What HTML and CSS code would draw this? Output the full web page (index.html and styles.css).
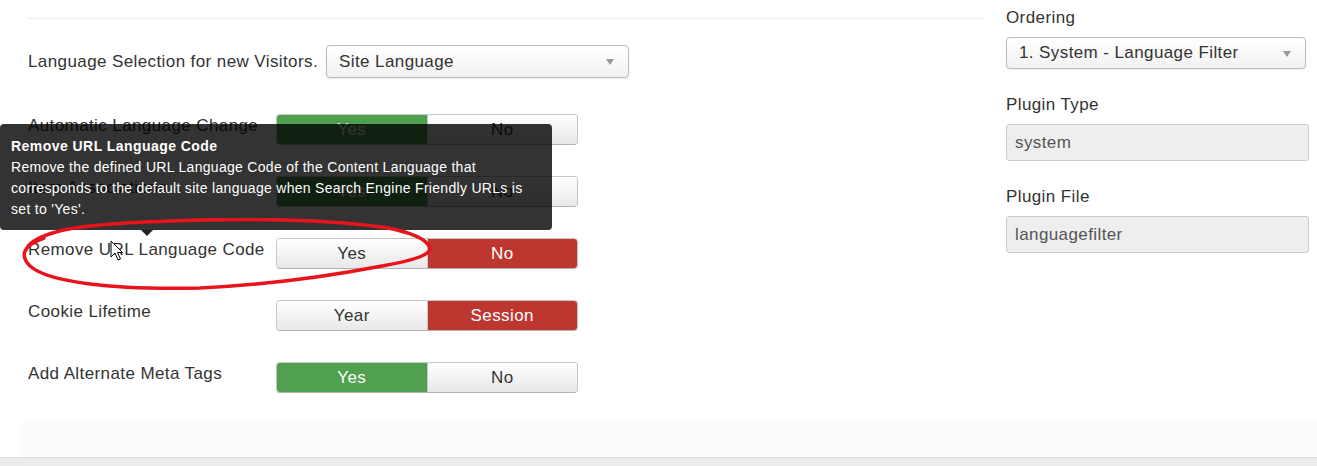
FILE: index.html
```html
<!DOCTYPE html>
<html lang="en">
<head>
    <meta charset="UTF-8">
    <meta name="viewport" content="width=device-width, initial-scale=1.0">
    <title>Language Filter</title>
    <link rel="stylesheet" href="styles.css">
</head>
<body>
<div class="page">
    <div class="main">
        <hr class="divider">

        <div class="fields">
            <div class="row row-inline">
                <label class="row-label">Language Selection for new Visitors.</label>
                <div class="select select-wide">Site Language</div>
            </div>
            <div class="row">
                <label class="row-label">Automatic Language Change</label>
                <div class="toggle">
                    <span class="opt yes">Yes</span>
                    <span class="opt">No</span>
                </div>
            </div>
            <div class="row">
                <label class="row-label">Item Associations</label>
                <div class="toggle">
                    <span class="opt yes">Yes</span>
                    <span class="opt">No</span>
                </div>
            </div>
            <div class="row">
                <label class="row-label">Remove URL Language Code</label>
                <div class="toggle">
                    <span class="opt">Yes</span>
                    <span class="opt no">No</span>
                </div>
            </div>
            <div class="row">
                <label class="row-label">Cookie Lifetime</label>
                <div class="toggle">
                    <span class="opt">Year</span>
                    <span class="opt no">Session</span>
                </div>
            </div>
            <div class="row">
                <label class="row-label">Add Alternate Meta Tags</label>
                <div class="toggle">
                    <span class="opt yes">Yes</span>
                    <span class="opt">No</span>
                </div>
            </div>
        </div>

        <div class="tooltip">
            <strong class="tooltip-title">Remove URL Language Code</strong>
            <p class="tooltip-text">Remove the defined URL Language Code of the Content Language that<br>corresponds to the default site language when Search Engine Friendly URLs is<br>set to 'Yes'.</p>
        </div>

        <svg class="scribble" width="440" height="80" viewBox="0 0 440 80">
            <path d="M44 20 C 22 28, 20 38, 30 48 C 48 64, 110 72, 200 70 C 262 67, 330 58, 382 48 C 416 42, 434 36, 429 28 C 424 19, 408 14, 388 10 C 330 1, 240 0, 170 3 C 112 5, 72 9, 56 14 C 42 18, 30 24, 27 30"
                  fill="none" stroke="#e8141b" stroke-width="3.5" stroke-linecap="round"/>
        </svg>

        <svg class="cursor" width="14" height="22" viewBox="0 0 14 22">
            <path d="M1 1 L1 17 L5 13 L8 20 L10.5 19 L7.5 12.5 L12.5 12.5 Z" fill="#fff" stroke="#000" stroke-width="1"/>
        </svg>
    </div>

    <div class="side">
        <label class="side-label">Ordering</label>
        <div class="select select-side">1. System - Language Filter</div>

        <label class="side-label">Plugin Type</label>
        <div class="readonly">system</div>

        <label class="side-label">Plugin File</label>
        <div class="readonly">languagefilter</div>
    </div>
</div>

<div class="band"></div>
<div class="footer"></div>
</body>
</html>
```

FILE: styles.css
```css
body { margin: 0; font-family: "Liberation Sans", Arial, sans-serif; font-size: 17px; letter-spacing: 0.4px; color: #333; background: #fff; }
.page { display: flex; height: 420px; }
.main { position: relative; width: 958px; padding-left: 27px; }
.divider { margin: 18px 0 0; border: 0; border-top: 1px solid #eee; }

.fields { display: flex; flex-direction: column; gap: 31px; margin-top: 26px; padding-left: 1px; }
.row { display: flex; align-items: flex-start; height: 31px; }
.row-inline { align-items: center; height: 33px; gap: 8px; margin-bottom: 5px; }
.row-label { width: 248px; padding-top: 2px; line-height: 20px; white-space: nowrap; }
.row-inline .row-label { width: auto; padding-top: 0; }

.select {
    position: relative;
    box-sizing: border-box;
    height: 33px;
    line-height: 31px;
    padding-left: 12px;
    border: 1px solid #bbb;
    border-radius: 4px;
    background: linear-gradient(#fff, #f2f2f2);
    box-shadow: 0 1px 2px rgba(0, 0, 0, 0.08);
}
.select::after {
    content: "";
    position: absolute;
    right: 14px;
    top: 13px;
    border-left: 4px solid transparent;
    border-right: 4px solid transparent;
    border-top: 6px solid #999;
}
.select-wide { width: 303px; }

.toggle {
    display: flex;
    width: 302px;
    height: 31px;
    box-sizing: border-box;
    border: 1px solid #c6c6c6;
    border-bottom-color: #b3b3b3;
    border-radius: 4px;
    overflow: hidden;
}
.opt {
    flex: 1;
    text-align: center;
    line-height: 29px;
    background: linear-gradient(#fff, #e8e8e8);
}
.opt + .opt { border-left: 1px solid #c6c6c6; }
.opt.yes { background: #4fa14f; color: #fff; }
.opt.no { background: #bd362f; color: #fff; }

.tooltip {
    position: absolute;
    left: 0;
    top: 124px;
    width: 530px;
    padding: 12px 11px 10px;
    background: rgba(0, 0, 0, 0.8);
    border-radius: 4px;
    color: #fff;
    font-size: 14px;
    letter-spacing: 0.3px;
    line-height: 21px;
    white-space: nowrap;
}
.tooltip::after {
    content: "";
    position: absolute;
    left: 141px;
    bottom: -6px;
    border-left: 6px solid transparent;
    border-right: 6px solid transparent;
    border-top: 6px solid #222;
}
.tooltip-title { display: block; font-weight: bold; letter-spacing: 0.45px; }
.tooltip-text { margin: 0; }

.scribble { position: absolute; left: 0; top: 218px; }
.cursor { position: absolute; left: 110px; top: 240px; }

.side { margin-left: 21px; padding-top: 8px; width: 303px; display: flex; flex-direction: column; }
.side-label { line-height: 20px; margin-bottom: 9px; }
.select-side { width: 300px; height: 32px; line-height: 30px; margin-bottom: 26px; }
.readonly {
    box-sizing: border-box;
    height: 37px;
    line-height: 35px;
    padding-left: 8px;
    border: 1px solid #ccc;
    border-radius: 3px;
    background: #eee;
    color: #555;
    margin-bottom: 26px;
}

.band { height: 37px; margin-left: 21px; background: #fcfcfc; }
.footer { height: 9px; border-top: 1px solid #ddd; background: #ececec; }
```
